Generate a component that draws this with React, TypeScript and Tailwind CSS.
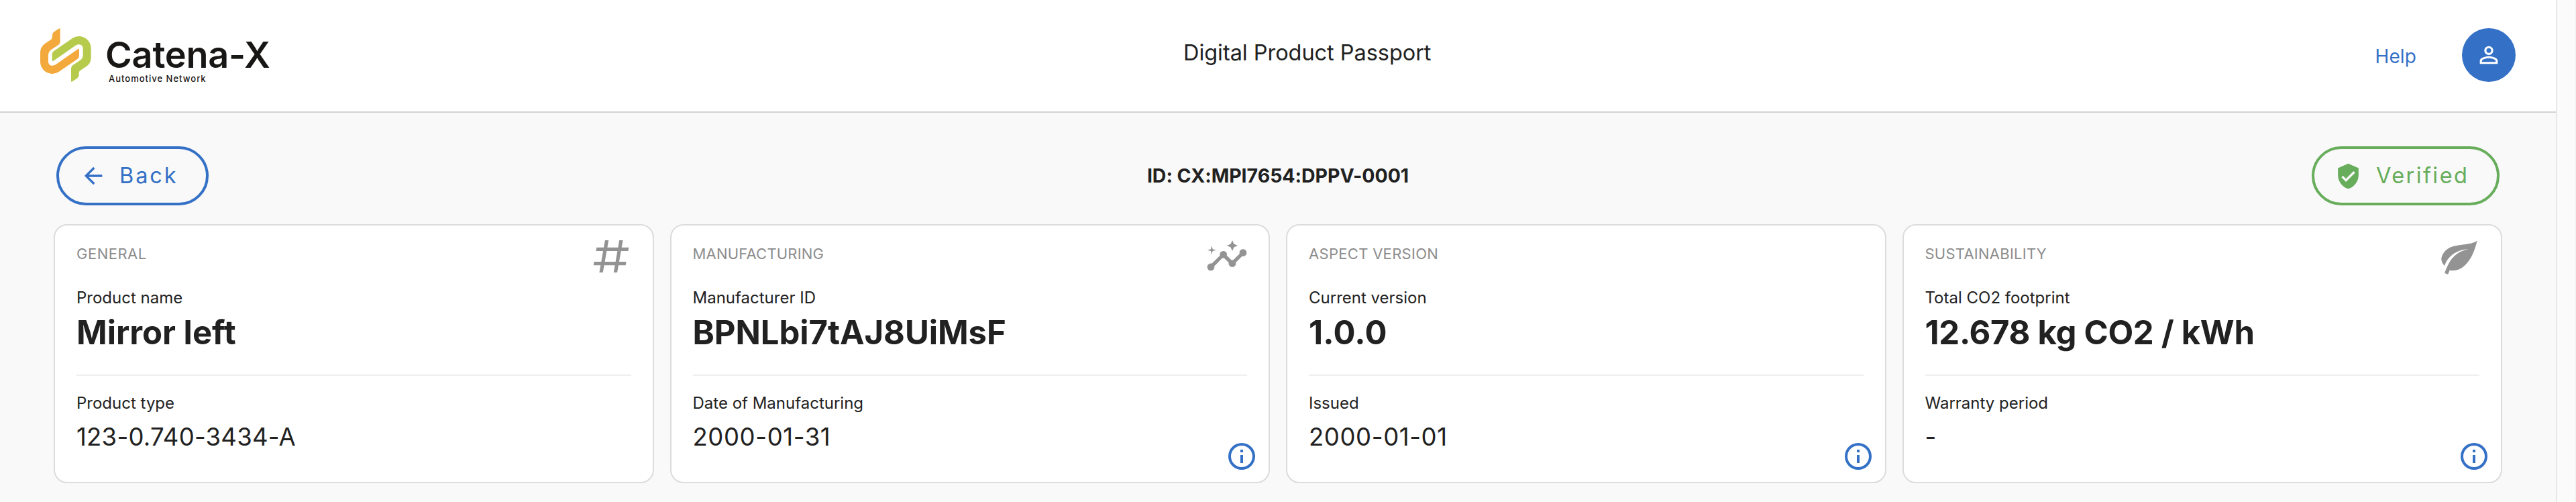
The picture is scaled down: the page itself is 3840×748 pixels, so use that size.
import React from "react";

const ICONS = {
  account:
    "M12 5.9a2.1 2.1 0 1 1 0 4.2 2.1 2.1 0 0 1 0-4.2m0 9c2.97 0 6.1 1.46 6.1 2.1v1.1H5.9V17c0-.64 3.13-2.1 6.1-2.1M12 4C9.79 4 8 5.79 8 8s1.79 4 4 4 4-1.79 4-4-1.79-4-4-4m0 9c-2.67 0-8 1.34-8 4v3h16v-3c0-2.66-5.33-4-8-4",
  arrowLeft: "M20 11v2H8l5.5 5.5-1.42 1.42L4.16 12l7.92-7.92L13.5 5.5 8 11h12z",
  shieldCheck:
    "M10 17l-4-4 1.41-1.41L10 14.17l6.59-6.59L18 9m-6-8L3 5v6c0 5.55 3.84 10.74 9 12 5.16-1.26 9-6.45 9-12V5l-9-4z",
  info: "M11 9h2V7h-2m1 13c-4.41 0-8-3.59-8-8s3.59-8 8-8 8 3.59 8 8-3.59 8-8 8m0-18A10 10 0 0 0 2 12a10 10 0 0 0 10 10 10 10 0 0 0 10-10A10 10 0 0 0 12 2m-1 15h2v-6h-2v6z",
  pound:
    "M5.41 21l.71-4h-4l.35-2h4l1.06-6h-4l.35-2h4l.71-4h2l-.71 4h6l.71-4h2l-.71 4h4l-.35 2h-4l-1.06 6h4l-.35 2h-4l-.71 4h-2l.71-4h-6l-.71 4h-2M9.53 9l-1.06 6h6l1.06-6h-6z",
  insights:
    "M21 8C19.5 8 18.7 9.4 19.1 10.5L15.5 14.1C15.2 14 14.8 14 14.5 14.1L11.9 11.5C12.3 10.4 11.5 9 10 9C8.6 9 7.7 10.4 8.1 11.5L3.5 16C2.4 15.7 1 16.5 1 18C1 19.1 1.9 20 3 20C4.4 20 5.3 18.6 4.9 17.5L9.4 12.9C9.7 13 10.1 13 10.4 12.9L13 15.5C12.7 16.5 13.5 18 15 18C16.5 18 17.3 16.6 16.9 15.5L20.5 11.9C21.6 12.2 23 11.4 23 10C23 8.9 22.1 8 21 8M15 9L15.9 6.9L18 6L15.9 5.1L15 3L14.1 5.1L12 6L14.1 6.9L15 9M3.5 11L4 9L6 8.5L4 8L3.5 6L3 8L1 8.5L3 9L3.5 11Z",
  leaf: "M17 8C8 10 5.9 16.17 3.82 21.34L5.71 22L6.66 19.7C7.14 19.87 7.64 20 8 20C19 20 22 3 22 3C21 5 14 5.25 9 6.25C4 7.25 2 11.5 2 13.5C2 15.5 3.75 17.25 3.75 17.25C7 8 17 8 17 8Z",
};

function Icon({ d, className }: { d: string; className: string }) {
  return (
    <svg viewBox="0 0 24 24" fill="currentColor" className={`shrink-0 ${className}`} aria-hidden="true">
      <path d={d} />
    </svg>
  );
}

const LINK =
  "M119 40Q119 34 113 38L92 52Q84 58 84 66V76Q84 82 79 86L52 104Q30 119 30 145V187C30 216 55 240 84 240Q100 240 113 231L196 174Q204 168 204 160V133Q204 127 198 130L100 198C85 208 66 203 66 185V157Q66 142 78 133L112 110Q119 105 119 96Z";

function Logo() {
  return (
    <div className="flex items-start">
      <svg viewBox="0 0 300 300" className="mt-[30px] h-[100px] w-[100px]" aria-hidden="true">
        <path d={LINK} fill="#f3a93c" />
        <path d={LINK} fill="#b6cb4c" transform="rotate(180 143.5 156)" />
      </svg>
      <div className="ml-[7px] mt-[52px] flex flex-col text-[#181715]">
        <span className="text-[54px] font-semibold leading-[60px] tracking-[-0.2px]">Catena-X</span>
        <span className="-mt-0.5 ml-[5px] text-[13px] font-medium leading-[14px] tracking-[1px]">
          Automotive Network
        </span>
      </div>
    </div>
  );
}

type Field = { label: string; value: string; valueClass: string };
type CardData = { title: string; titleClass: string; icon?: string; main: Field; sub: Field; info: boolean };

const CARDS: CardData[] = [
  {
    title: "GENERAL",
    titleClass: "tracking-[0.5px]",
    icon: ICONS.pound,
    main: { label: "Product name", value: "Mirror left", valueClass: "tracking-normal" },
    sub: { label: "Product type", value: "123-0.740-3434-A", valueClass: "tracking-[0.25px]" },
    info: false,
  },
  {
    title: "MANUFACTURING",
    titleClass: "tracking-[0.2px]",
    icon: ICONS.insights,
    main: { label: "Manufacturer ID", value: "BPNLbi7tAJ8UiMsF", valueClass: "tracking-[-0.05px]" },
    sub: { label: "Date of Manufacturing", value: "2000-01-31", valueClass: "tracking-[0.6px]" },
    info: true,
  },
  {
    title: "ASPECT VERSION",
    titleClass: "tracking-[0.3px]",
    main: { label: "Current version", value: "1.0.0", valueClass: "tracking-[0.2px]" },
    sub: { label: "Issued", value: "2000-01-01", valueClass: "tracking-[0.6px]" },
    info: true,
  },
  {
    title: "SUSTAINABILITY",
    titleClass: "tracking-[0.25px]",
    icon: ICONS.leaf,
    main: { label: "Total CO2 footprint", value: "12.678 kg CO2 / kWh", valueClass: "tracking-[-0.3px]" },
    sub: { label: "Warranty period", value: "-", valueClass: "tracking-normal" },
    info: true,
  },
];

function Card({ title, titleClass, icon, main, sub, info }: CardData) {
  return (
    <section className="relative h-[386px] rounded-[20px] border-2 border-[#dcdcdc] bg-white px-8 pt-[14px]">
      <div className="flex h-16 items-start justify-between">
        <h2 className={`text-[22px] leading-[56px] text-[#8c8c8c] ${titleClass}`}>{title}</h2>
        {icon && <Icon d={icon} className="-mr-0.5 h-16 w-16 text-[#939393]" />}
      </div>
      <div className="mt-[14px] text-2xl leading-8">{main.label}</div>
      <div className={`mt-2 text-[49px] font-bold leading-[56px] ${main.valueClass}`}>{main.value}</div>
      <div className="mt-[34px] h-0.5 bg-[#efefef]" />
      <div className="mt-[25px] text-2xl leading-8">{sub.label}</div>
      <div className={`mt-[10px] text-[36.5px] leading-[48px] ${sub.valueClass}`}>{sub.value}</div>
      {info && <Icon d={ICONS.info} className="absolute bottom-[14px] right-4 h-12 w-12 text-[#3370c6]" />}
    </section>
  );
}

export default function App() {
  return (
    <div className="flex h-[748px] w-full overflow-hidden bg-[#f9f9f9] font-[Inter,sans-serif] text-[#212121]">
      <div className="flex w-[3810px] shrink-0 flex-col">
        <header className="flex h-[168px] items-start border-b-2 border-[#d3d3d3] bg-white pl-[50px] pr-[60px]">
          <div className="w-[1714px] shrink-0">
            <Logo />
          </div>
          <h1 className="pt-[59px] text-[32.5px] leading-10 tracking-[-0.05px]">Digital Product Passport</h1>
          <div className="ml-auto flex items-center pt-[42px]">
            <a className="mr-[68px] mt-[3px] text-[28px] leading-10 tracking-[0.1px] text-[#3370c6]">Help</a>
            <div className="flex h-20 w-20 items-center justify-center rounded-full bg-[#3370c6] text-white">
              <Icon d={ICONS.account} className="h-10 w-10" />
            </div>
          </div>
        </header>

        <main className="flex flex-col pl-20 pr-20">
          <div className="mt-[50px] grid h-[88px] grid-cols-[1fr_auto_1fr] items-center pl-1 pr-1">
            <button className="flex h-[88px] w-[227px] items-center rounded-full border-4 border-[#3370c6] pl-[31px] text-[#3370c6]">
              <Icon d={ICONS.arrowLeft} className="h-10 w-10" />
              <span className="ml-[19px] text-[32.5px] leading-10 tracking-[2.9px]">Back</span>
            </button>
            <div className="text-[28.5px] font-bold leading-10 tracking-[-0.04px]">ID: CX:MPI7654:DPPV-0001</div>
            <div className="flex h-[88px] w-[280px] items-center justify-self-end rounded-full border-4 border-[#67ad5b] pl-[30px] text-[#67ad5b]">
              <Icon d={ICONS.shieldCheck} className="h-[41px] w-[41px]" />
              <span className="ml-[21px] text-[32.5px] leading-10 tracking-[2.4px]">Verified</span>
            </div>
          </div>
          <div className="mt-7 grid grid-cols-4 gap-6">
            {CARDS.map((card) => (
              <Card key={card.title} {...card} />
            ))}
          </div>
        </main>
      </div>
      <div className="flex-1 border-l-2 border-r-2 border-l-[#e7e7e7] border-r-[#f3f3f3] bg-[#fbfbfb]" />
    </div>
  );
}
